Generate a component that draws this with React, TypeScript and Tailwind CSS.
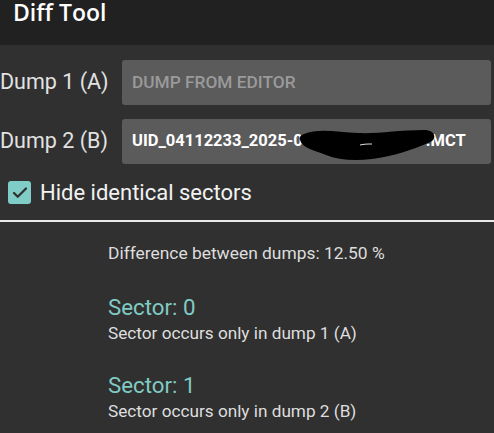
import { Check } from 'lucide-react';

const Redaction = () => (
    <svg
        className="pointer-events-none absolute left-[176px] top-[9px]"
        width="140"
        height="34"
        viewBox="0 0 140 34"
    >
        <path
            d="M6 6 C20 0 40 4 60 5 C80 6 100 2 126 2 C138 2 140 12 130 15 C114 22 96 28 74 31 C56 33 40 32 28 27 C16 22 4 20 2 12 C1 9 3 7 6 6 Z"
            fill="#000"
        />
        <path d="M62 17 C66 16 70 16 74 16" stroke="#ddd" strokeWidth="1" fill="none" />
    </svg>
);

const DumpRow = ({ label, children }: { label: string; children: React.ReactNode }) => (
    <div className="flex h-[45px] items-center">
        <div className="w-[122px] whitespace-nowrap text-[21.5px] text-[#e2e2e2]">{label}</div>
        <div className="relative flex h-full flex-1 items-center rounded-[3px] bg-[#5b5b5b] px-[10px]">
            {children}
        </div>
    </div>
);

export default function App() {
    return (
        <div
            className="flex h-[433px] w-[494px] flex-col overflow-hidden bg-[#303030]"
            style={{ fontFamily: 'Roboto, "Noto Sans", sans-serif' }}
        >
            <div className="flex h-[45px] items-start bg-[#212121] pl-[13px]">
                <span
                    className="text-[23px] font-semibold leading-[25px] text-white"
                    style={{ fontFamily: '"Open Sans", sans-serif' }}
                >
                    Diff Tool
                </span>
            </div>

            <div className="flex flex-col gap-[14px] pr-[3px] pt-[15px]">
                <DumpRow label="Dump 1 (A)">
                    <span className="text-[17.3px] font-medium text-[#9a9a9a]">DUMP FROM EDITOR</span>
                </DumpRow>
                <DumpRow label="Dump 2 (B)">
                    <span className="flex whitespace-nowrap text-[16.5px] font-bold text-white">
                        <span>UID_04112233_2025-0</span>
                        <span className="inline-block w-[123px]" />
                        <span>.MCT</span>
                    </span>
                    <Redaction />
                </DumpRow>
            </div>

            <div className="mt-[17px] flex h-[23px] items-center gap-[9px] pl-[8px]">
                <div className="flex size-[23px] items-center justify-center rounded-[3px] bg-[#7fcdc6]">
                    <Check size={18} strokeWidth={3} color="#303030" />
                </div>
                <span className="whitespace-nowrap text-[22px] text-[#f2f2f2]">Hide identical sectors</span>
            </div>

            <div className="mt-[16px] h-[2px] w-full bg-[#e8e8e8]" />

            <div className="flex flex-col pl-[108px] pt-[20px]">
                <div className="text-[17.4px] leading-[22px] text-[#dedede]">
                    Difference between dumps: 12.50 %
                </div>

                <div className="mt-[29px] text-[22.3px] leading-[28px] text-[#80cbc4]">Sector: 0</div>
                <div className="text-[17.2px] leading-[24px] text-[#dedede]">Sector occurs only in dump 1 (A)</div>

                <div className="mt-[26px] text-[22.3px] leading-[28px] text-[#80cbc4]">Sector: 1</div>
                <div className="text-[17.2px] leading-[24px] text-[#dedede]">Sector occurs only in dump 2 (B)</div>
            </div>
        </div>
    );
}
